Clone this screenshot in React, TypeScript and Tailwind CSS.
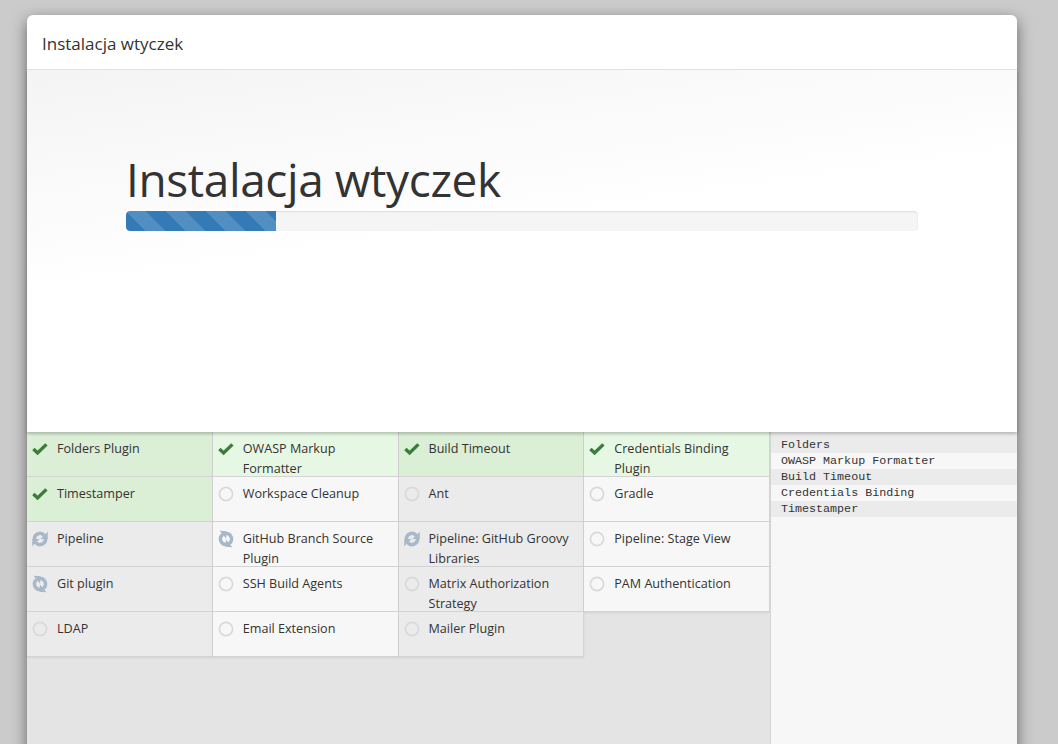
import React from "react";

type Status = "ok" | "pending" | "loading" | "spin";

interface Plugin {
  name: string;
  status: Status;
}

const plugins: Plugin[] = [
  { name: "Folders Plugin", status: "ok" },
  { name: "OWASP Markup Formatter", status: "ok" },
  { name: "Build Timeout", status: "ok" },
  { name: "Credentials Binding Plugin", status: "ok" },
  { name: "Timestamper", status: "ok" },
  { name: "Workspace Cleanup", status: "pending" },
  { name: "Ant", status: "pending" },
  { name: "Gradle", status: "pending" },
  { name: "Pipeline", status: "loading" },
  { name: "GitHub Branch Source Plugin", status: "spin" },
  { name: "Pipeline: GitHub Groovy Libraries", status: "loading" },
  { name: "Pipeline: Stage View", status: "pending" },
  { name: "Git plugin", status: "spin" },
  { name: "SSH Build Agents", status: "pending" },
  { name: "Matrix Authorization Strategy", status: "pending" },
  { name: "PAM Authentication", status: "pending" },
  { name: "LDAP", status: "pending" },
  { name: "Email Extension", status: "pending" },
  { name: "Mailer Plugin", status: "pending" },
];

const log = ["Folders", "OWASP Markup Formatter", "Build Timeout", "Credentials Binding", "Timestamper"];

const StatusIcon = ({ status }: { status: Status }) => {
  if (status === "ok") {
    return (
      <svg width="16" height="14" viewBox="0 0 16 14" className="shrink-0">
        <path d="M1.4 7 L5.6 11 L14.4 2.4" fill="none" stroke="#3b7d3b" strokeWidth="3.4" />
      </svg>
    );
  }
  if (status === "pending") {
    return (
      <svg width="16" height="16" viewBox="0 0 16 16" className="shrink-0">
        <circle cx="8" cy="8" r="6.6" fill="none" stroke="#d9d9d9" strokeWidth="1.7" />
      </svg>
    );
  }
  return (
    <svg
      width="16"
      height="16"
      viewBox="0 0 14 14"
      className={`shrink-0 ${status === "spin" ? "rotate-[95deg]" : ""}`}
    >
      <g fill="none" stroke="#a7b8c9" strokeWidth="3">
        <path d="M2.1 7.6 A4.9 4.9 0 0 1 10.8 4" />
        <path d="M11.9 6.4 A4.9 4.9 0 0 1 3.2 10" />
      </g>
      <g fill="#a7b8c9">
        <polygon points="13.8,0.6 13.8,7 7.4,7" />
        <polygon points="0.2,13.4 0.2,7 6.6,7" />
      </g>
    </svg>
  );
};

const cellBg = (index: number, status: Status) => {
  const odd = index % 4 === 0 || index % 4 === 2;
  if (status === "ok") return odd ? "bg-[#dbeed6]" : "bg-[#e6f7e3]";
  return odd ? "bg-[#ebebeb]" : "bg-[#f7f7f7]";
};

export default function App() {
  return (
    <div className="w-[1058px] h-[744px] overflow-hidden bg-[#cbcbcb] pt-[15px] pl-[27px] font-['Open_Sans',sans-serif] text-[#333]">
      <div className="w-[990px] h-[740px] bg-white rounded-t-[6px] shadow-[0_5px_15px_rgba(0,0,0,0.5)] flex flex-col">
        <div className="h-[55px] shrink-0 px-[15px] pt-[4px] flex items-center border-b border-[#e5e5e5] text-[17px]">
          Instalacja wtyczek
        </div>

        <div className="relative z-10 h-[362px] shrink-0 px-[99px] pt-[83px] bg-[linear-gradient(172deg,#f4f4f4_0%,#ffffff_45%)] shadow-[0_2px_3px_rgba(0,0,0,0.22)]">
          <h1 className="text-[46px] leading-[52px] tracking-[-0.4px]">Instalacja wtyczek</h1>
          <div className="mt-[6px] h-[20px] rounded-[4px] bg-[#f5f5f5] shadow-[inset_0_1px_2px_rgba(0,0,0,0.1)] overflow-hidden">
            <div className="h-full w-[150px] rounded-l-[4px] bg-[#337ab7] bg-[linear-gradient(45deg,rgba(255,255,255,0.15)_25%,transparent_25%,transparent_50%,rgba(255,255,255,0.15)_50%,rgba(255,255,255,0.15)_75%,transparent_75%,transparent)] bg-size-[40px_40px]" />
          </div>
        </div>

        <div className="flex flex-1 min-h-0">
          <div className="w-[743px] shrink-0 bg-[#e4e4e4]">
            <div className="grid grid-cols-4">
              {plugins.map((p, i) => (
                <div
                  key={p.name}
                  className={`h-[45px] flex gap-[8px] pl-[5px] pr-[4px] pt-[7px] border-r border-b border-[#d4d4d4] shadow-[0_1px_2px_rgba(0,0,0,0.08)] text-[12.6px] leading-[20px] ${cellBg(i, p.status)}`}
                >
                  <div className="w-[16px] h-[20px] shrink-0 flex items-center justify-center">
                    <StatusIcon status={p.status} />
                  </div>
                  <div className="pl-[1px]">{p.name}</div>
                </div>
              ))}
            </div>
          </div>
          <div className="flex-1 bg-[#f7f7f7] border-l border-[#d4d4d4] font-['Liberation_Mono',monospace] text-[11.7px] text-[#333]">
            {log.map((l, i) => (
              <div
                key={l}
                className={`pl-[10px] leading-[16px] ${i === 0 ? "pt-[5px]" : ""} ${i % 2 === 0 ? "bg-[#ebebeb]" : "bg-[#f7f7f7]"}`}
              >
                {l}
              </div>
            ))}
          </div>
        </div>
      </div>
    </div>
  );
}
